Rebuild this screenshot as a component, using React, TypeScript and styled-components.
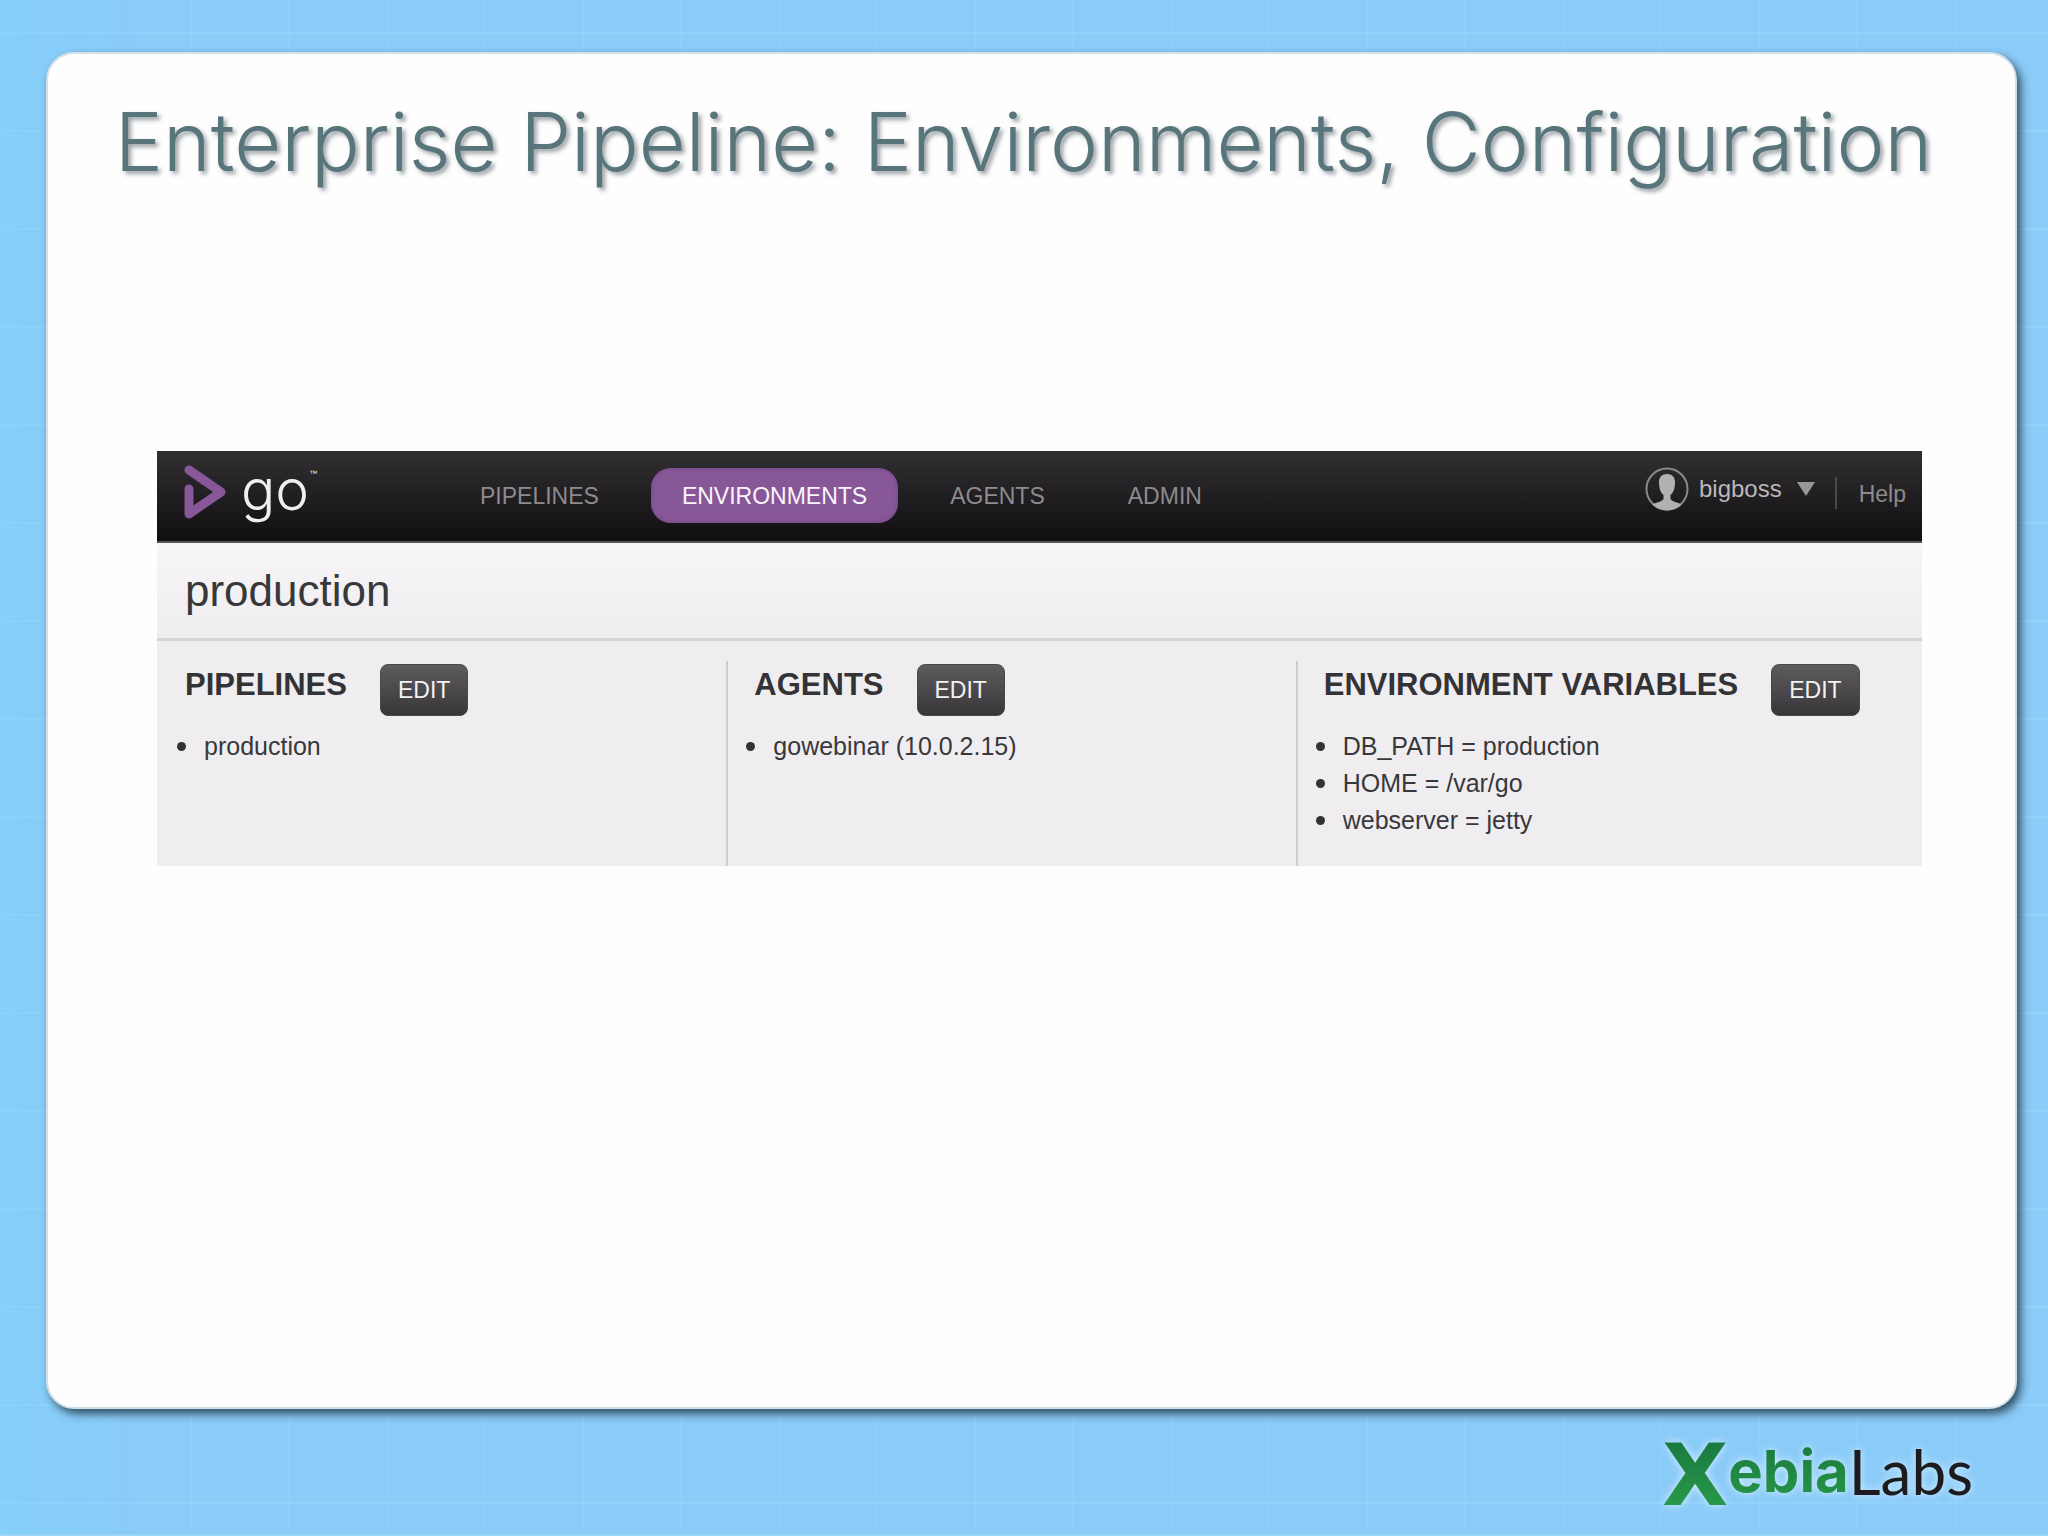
import React from "react";
import styled, { createGlobalStyle } from "styled-components";

const GlobalStyle = createGlobalStyle`
  *, *::before, *::after { box-sizing: border-box; }
  body {
    margin: 0;
    font-family: "Liberation Sans", Arial, sans-serif;
    color: #38383b;
  }
  h1, h2, h3, ul { margin: 0; padding: 0; }
  a { color: inherit; text-decoration: none; }
`;

const Slide = styled.div`
  display: flex;
  flex-direction: column;
  min-height: 100vh;
  padding: 52px 31px 0 46px;
  border-bottom: 2px solid #9bd6fb;
  background-color: #8acbf8;
  background-image:
    linear-gradient(90deg, rgba(130, 210, 252, 0.6), rgba(138, 203, 248, 0) 140px),
    linear-gradient(90deg, rgba(160, 222, 255, 0.2) 2px, transparent 2px),
    linear-gradient(180deg, rgba(160, 222, 255, 0.4) 2px, transparent 2px);
  background-size: 100% 100%, 98px 98px, 98px 98px;
  background-position: 0 0, 92px 0, 0 32px;
`;

const Card = styled.main`
  flex: 1;
  border: 2px solid #d3e0e8;
  border-radius: 28px;
  background: #fefefe;
  box-shadow: 4px 5px 8px rgba(35, 60, 75, 0.85);
`;

const Title = styled.h1`
  padding: 36px 16px 0 0;
  color: #58757c;
  font-family: "Century Gothic", Inter, sans-serif;
  font-size: 81px;
  font-weight: 300;
  line-height: 104px;
  text-align: center;
  white-space: nowrap;
  text-shadow: 3px 3px 4px rgba(60, 70, 80, 0.5);
`;

const AppFrame = styled.section`
  margin: 257px 93px 0 109px;
  background: #efedef;
`;

const TopBar = styled.header`
  display: flex;
  align-items: flex-start;
  height: 92px;
  padding: 0 16px 0 26px;
  border-bottom: 2px solid #565456;
  background: linear-gradient(180deg, #312f31, #100e10);
  color: #8d8b8d;
  font-size: 23px;
`;

const Brand = styled.a`
  display: flex;
  width: 266px;
  padding-top: 13px;
  color: #f0eff0;
`;

const BrandMark = styled.svg`
  width: 46px;
  height: 56px;
`;

const BrandName = styled.span`
  margin-left: 12px;
  font-family: "Century Gothic", Inter, sans-serif;
  font-size: 57px;
  font-weight: 300;
  line-height: 52px;
`;

const Trademark = styled.sup`
  font-size: 8px;
  line-height: 8px;
  padding-top: 6px;
`;

const Nav = styled.nav`
  display: flex;
  flex: 1;
  gap: 21px;
  padding-top: 17px;
`;

const NavLink = styled.a<{ $active?: boolean }>`
  padding: 0 31px;
  border-radius: 20px;
  line-height: 56px;
  height: 55px;
  color: ${(p) => (p.$active ? "#fbf5fc" : "inherit")};
  background: ${(p) => (p.$active ? "#885798" : "transparent")};
  box-shadow: ${(p) => (p.$active ? "inset 0 0 4px #6f4480" : "none")};
`;

const UserButton = styled.button`
  display: flex;
  align-items: center;
  gap: 10px;
  margin-top: 16px;
  padding: 0;
  border: 0;
  background: none;
  color: #bab8ba;
  font: inherit;
  font-size: 24px;
  line-height: 44px;
`;

const Avatar = styled.svg`
  width: 44px;
  height: 44px;
`;

const Caret = styled.svg`
  width: 18px;
  height: 14px;
  margin-left: 5px;
`;

const HelpLink = styled.a`
  margin: 26px 0 0 20px;
  padding-left: 22px;
  border-left: 2px solid #4b494b;
  line-height: 34px;
  height: 32px;
`;

const PageHeading = styled.h2`
  padding: 0 28px;
  border-bottom: 3px solid #d5d3d5;
  background: linear-gradient(180deg, #f7f5f7, #efedef);
  font-size: 44px;
  font-weight: 400;
  line-height: 95px;
`;

const Columns = styled.div`
  display: grid;
  grid-template-columns: 10fr 10fr 11fr;
  padding-top: 20px;
`;

const Column = styled.section`
  min-height: 205px;
  padding-bottom: 16px;
  border-left: 2px solid #cfcdcf;
  &:first-child { border-left-color: transparent; }
`;

const ColumnHead = styled.div`
  display: flex;
  align-items: flex-start;
  gap: 33px;
  padding: 3px 0 0 26px;
`;

const ColumnTitle = styled.h3`
  color: #333335;
  font-size: 31px;
  font-weight: 700;
  line-height: 41px;
  white-space: nowrap;
`;

const EditButton = styled.button`
  height: 52px;
  padding: 0 17px;
  border: 1px solid #4a484a;
  border-radius: 8px;
  background: linear-gradient(180deg, #5e5c5e, #373537);
  color: #f3f2f3;
  font: inherit;
  font-size: 23px;
`;

const Items = styled.ul`
  padding: 12px 0 0 18px;
  list-style: none;
  font-size: 25px;
  line-height: 37px;
`;

const Item = styled.li`
  display: flex;
  align-items: center;
  gap: 18px;
  white-space: nowrap;
  &::before {
    content: "";
    width: 9px;
    height: 9px;
    border-radius: 50%;
    background: #333335;
  }
`;

const Footer = styled.footer`
  display: flex;
  justify-content: flex-end;
  height: 125px;
  padding: 24px 44px 0 0;
`;

const Logo = styled.a`
  display: flex;
  align-items: flex-start;
  filter: drop-shadow(0 0 4px rgba(225, 245, 255, 0.9));
  font-family: Inter, sans-serif;
  font-size: 58px;
  line-height: 76px;
`;

const LogoGreen = styled.span`
  background: linear-gradient(180deg, #1b7a40 10px, #279748 70px);
  background-clip: text;
  color: transparent;
  font-weight: 700;
`;

const LogoInitial = styled(LogoGreen)`
  font-family: "DejaVu Sans", sans-serif;
  font-size: 86px;
  line-height: 84px;
`;

const LogoBlack = styled.span`
  color: #1d1b1e;
  font-family: "Century Gothic", Lato, sans-serif;
  font-size: 62px;
`;

const columns = [
  { title: "PIPELINES", items: ["production"] },
  { title: "AGENTS", items: ["gowebinar (10.0.2.15)"] },
  {
    title: "ENVIRONMENT VARIABLES",
    items: ["DB_PATH = production", "HOME = /var/go", "webserver = jetty"],
  },
];

const tabs = ["PIPELINES", "ENVIRONMENTS", "AGENTS", "ADMIN"];

export default function App() {
  return (
    <>
      <GlobalStyle />
      <Slide>
        <Card>
          <Title>Enterprise Pipeline: Environments, Configuration</Title>
          <AppFrame>
            <TopBar>
              <Brand href="#">
                <BrandMark viewBox="0 0 46 56" aria-hidden="true">
                  <path
                    d="M6 6 38 28 6 50V25"
                    fill="none"
                    stroke="#885798"
                    strokeWidth="9"
                    strokeLinecap="round"
                    strokeLinejoin="round"
                  />
                </BrandMark>
                <BrandName>go</BrandName>
                <Trademark>™</Trademark>
              </Brand>
              <Nav>
                {tabs.map((tab) => (
                  <NavLink key={tab} href="#" $active={tab === "ENVIRONMENTS"}>
                    {tab}
                  </NavLink>
                ))}
              </Nav>
              <UserButton type="button">
                <Avatar viewBox="0 0 44 44" aria-hidden="true">
                  <circle cx="22" cy="22" r="20.500" fill="none" stroke="#8b898b" strokeWidth="2" />
                  <path
                    d="M22 7c-5 0-8 3-8 8 0 6 1.500 11 4.500 13v4c-2 3-7 3-11 5.500 4 4 9 6 14.500 6s10.500-2 14.500-6c-4-2.500-9-2.500-11-5.500v-4c3-2 4.500-7 4.500-13 0-5-3-8-8-8Z"
                    fill="#b2b0b2"
                  />
                </Avatar>
                bigboss
                <Caret viewBox="0 0 18 14" aria-hidden="true">
                  <path d="M0 0h18L9 14Z" fill="#989698" />
                </Caret>
              </UserButton>
              <HelpLink href="#">Help</HelpLink>
            </TopBar>
            <PageHeading>production</PageHeading>
            <Columns>
              {columns.map((column) => (
                <Column key={column.title}>
                  <ColumnHead>
                    <ColumnTitle>{column.title}</ColumnTitle>
                    <EditButton type="button">EDIT</EditButton>
                  </ColumnHead>
                  <Items>
                    {column.items.map((item) => (
                      <Item key={item}>{item}</Item>
                    ))}
                  </Items>
                </Column>
              ))}
            </Columns>
          </AppFrame>
        </Card>
        <Footer>
          <Logo href="#" aria-label="XebiaLabs">
            <LogoInitial>X</LogoInitial>
            <LogoGreen>ebia</LogoGreen>
            <LogoBlack>Labs</LogoBlack>
          </Logo>
        </Footer>
      </Slide>
    </>
  );
}
